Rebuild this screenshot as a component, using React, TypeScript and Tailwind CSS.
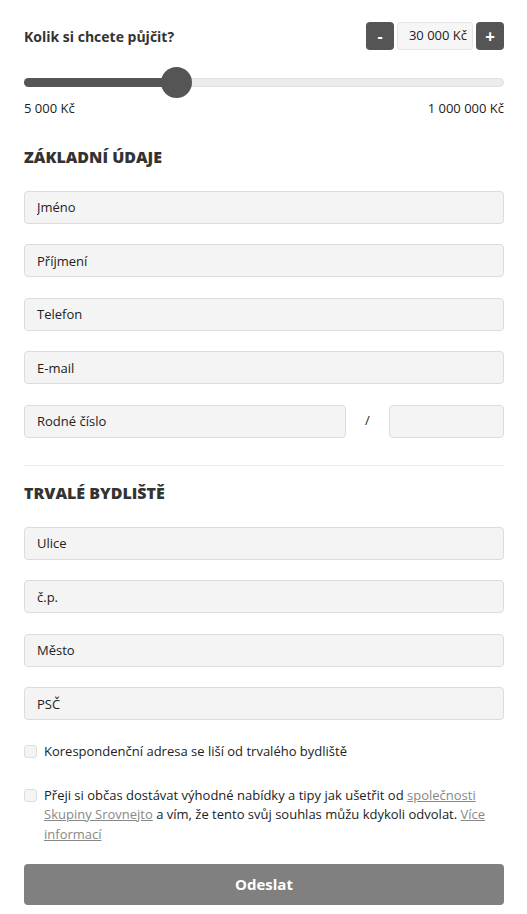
import React from "react";

const inputCls =
  "h-[33px] w-full rounded-[4px] border border-[#dcdcdc] bg-[#f4f4f4] px-[12px] text-[13px] text-[#222] placeholder:text-[#222] outline-none";

function Field({ ph }: { ph: string }) {
  return <input className={inputCls} placeholder={ph} />;
}

export default function App() {
  return (
    <div
      className="w-[527px] bg-white pl-[24px] pr-[23px] text-[#222]"
      style={{ fontFamily: '"Open Sans", "Noto Sans", sans-serif' }}
    >
      <div className="flex items-center justify-between pt-[22px]">
        <div className="text-[14px] font-bold text-[#333]">Kolik si chcete půjčit?</div>
        <div className="flex items-center gap-[3px]">
          <button className="flex h-[28px] w-[28px] items-center justify-center rounded-[4px] bg-[#555] text-[16px] font-bold leading-none text-white">
            -
          </button>
          <div className="flex h-[28px] w-[76px] items-center justify-end rounded-[3px] border border-[#e6e6e6] bg-[#f6f6f6] pr-[5px] text-[13px] text-[#222]">
            30 000 Kč
          </div>
          <button className="flex h-[28px] w-[28px] items-center justify-center rounded-[4px] bg-[#555] text-[17px] font-bold leading-none text-white">
            +
          </button>
        </div>
      </div>

      <div className="relative mt-[17px] h-[30px]">
        <div className="absolute left-0 right-0 top-[11px] h-[9px] rounded-full border border-[#e0e0e0] bg-[#ececec]" />
        <div className="absolute left-0 top-[11px] h-[9px] w-[152px] rounded-l-full bg-[#555]" />
        <div className="absolute left-[137px] top-0 h-[31px] w-[31px] rounded-full bg-[#555]" />
      </div>
      <div className="mt-[2px] flex justify-between text-[13px] text-[#222]">
        <span>5 000 Kč</span>
        <span>1 000 000 Kč</span>
      </div>

      <h2 className="mt-[26px] text-[16px] font-extrabold uppercase text-[#333]">Základní údaje</h2>

      <div className="mt-[22px] flex flex-col gap-[20.5px]">
        <Field ph="Jméno" />
        <Field ph="Příjmení" />
        <Field ph="Telefon" />
        <Field ph="E-mail" />
        <div className="flex items-center">
          <input className={inputCls + " !w-[322px]"} placeholder="Rodné číslo" />
          <span className="w-[43px] text-center text-[13px]">/</span>
          <input className={inputCls + " !w-[115px]"} />
        </div>
      </div>

      <div className="mt-[27px] h-px bg-[#eeeeee]" />

      <h2 className="mt-[15px] text-[16px] font-extrabold uppercase text-[#333]">Trvalé bydliště</h2>

      <div className="mt-[22px] flex flex-col gap-[20.5px]">
        <Field ph="Ulice" />
        <Field ph="č.p." />
        <Field ph="Město" />
        <Field ph="PSČ" />
      </div>

      <label className="mt-[22px] flex items-center gap-[7px] text-[13px] text-[#222]">
        <span className="h-[13px] w-[13px] shrink-0 rounded-[3px] border border-[#ddd] bg-[#f4f4f4]" />
        Korespondenční adresa se liší od trvalého bydliště
      </label>

      <label className="mt-[24px] flex items-start gap-[7px] text-[13px] leading-[19.5px] text-[#222]">
        <span className="mt-[3px] h-[13px] w-[13px] shrink-0 rounded-[3px] border border-[#ddd] bg-[#f4f4f4]" />
        <span>
          Přeji si občas dostávat výhodné nabídky a tipy jak ušetřit od{" "}
          <a className="text-[#888] underline">společnosti Skupiny Srovnejto</a> a vím, že tento svůj souhlas můžu
          kdykoli odvolat. <a className="text-[#888] underline">Více informací</a>
        </span>
      </label>

      <button className="mb-[10px] mt-[20px] h-[41px] w-full rounded-[4px] bg-[#808080] text-[15px] font-bold text-white">
        Odeslat
      </button>
    </div>
  );
}
